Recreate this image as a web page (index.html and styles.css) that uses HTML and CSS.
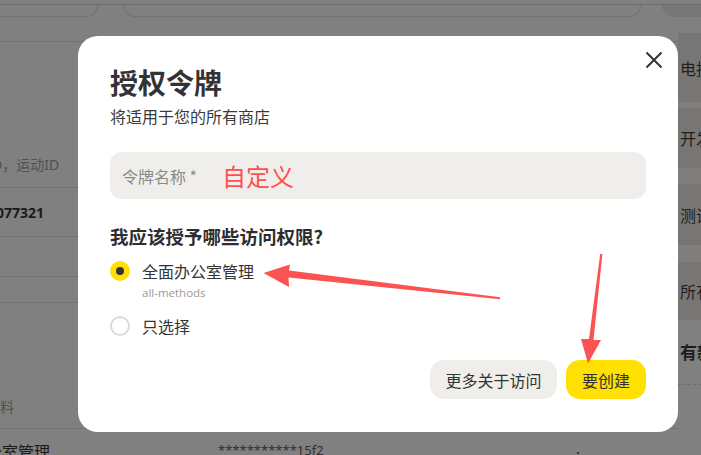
FILE: index.html
```html
<!DOCTYPE html>
<html lang="zh">
<head>
<meta charset="utf-8">
<title>授权令牌</title>
<link rel="stylesheet" href="styles.css">
</head>
<body>
<div class="page">
  <div class="topbar">
    <div class="tf tf1"></div>
    <div class="tf tf2"></div>
    <div class="tf tf3"></div>
  </div>
  <div class="main">
    <div class="left">
      <div class="row row-h"><span class="muted">D，运动ID</span></div>
      <div class="row row-a"><span class="strong">077321</span></div>
      <div class="row row-b"></div>
      <div class="row row-c"></div>
      <div class="row row-d"><span class="muted">料</span></div>
      <div class="row row-e"><span class="dark">公室管理</span><span class="mask">***********15f2</span><span class="dot">.</span></div>
    </div>
    <div class="right">
      <div class="band b1"><span>电拐</span></div>
      <div class="gap g1"></div>
      <div class="band b2"><span>开发</span></div>
      <div class="gap g2"></div>
      <div class="band b3"><span>测试</span></div>
      <div class="gap g3"></div>
      <div class="band b4"><span>所有</span></div>
      <div class="plain"><span class="bold">有新</span></div>
      <div class="dashed"></div>
    </div>
  </div>
</div>

<div class="modal">
  <button class="close" aria-label="关闭">
    <svg width="18" height="18" viewBox="0 0 18 18"><path d="M1.5 1.5 L16.5 16.5 M16.5 1.5 L1.5 16.5" stroke="#333" stroke-width="2" fill="none"/></svg>
  </button>
  <h1 class="title">授权令牌</h1>
  <p class="subtitle">将适用于您的所有商店</p>
  <div class="input">
    <span class="placeholder">令牌名称 *</span>
    <span class="annot">自定义</span>
  </div>
  <h2 class="question">我应该授予哪些访问权限?</h2>
  <div class="options">
    <div class="option">
      <div class="opt-row"><span class="radio checked"></span><span class="opt-label">全面办公室管理</span></div>
      <div class="opt-sub">all-methods</div>
    </div>
    <div class="option">
      <div class="opt-row"><span class="radio"></span><span class="opt-label">只选择</span></div>
    </div>
  </div>
  <div class="actions">
    <button class="btn btn-gray">更多关于访问</button>
    <button class="btn btn-yellow">要创建</button>
  </div>
</div>

<svg class="arrows" width="701" height="455" viewBox="0 0 701 455">
  <polygon fill="#fb5252" points="500,297.3 289,270.5 290,264.5 263.5,273 289,287 288.5,277.5 500,299.3"/>
  <polygon fill="#fb5252" points="600.2,254 589,339 581,339 588,363.5 601,340 593.5,340 602.4,254"/>
</svg>
</body>
</html>
```

FILE: styles.css
```css
* { box-sizing: border-box; }
html, body { margin: 0; padding: 0; }
body {
  width: 701px;
  height: 455px;
  overflow: hidden;
  position: relative;
  font-family: "Noto Sans", "Noto Sans CJK SC", sans-serif;
  background: #808080;
}

/* dimmed background page */
.page {
  width: 701px;
  height: 455px;
  display: flex;
  flex-direction: column;
  background: #808080;
  color: #1c1c1c;
}
.topbar {
  height: 38px;
  flex: none;
  border-top: 1px solid #6e6e6e;
  margin-top: 4px;
  border-bottom: 1px solid #737373;
  display: flex;
  align-items: flex-start;
}
.tf {
  height: 12px;
  border: 1px solid #727272;
  border-top: none;
  border-radius: 0 0 16px 16px;
  flex: none;
}
.tf1 { width: 123px; margin-left: -25px; }
.tf2 { width: 518px; margin-left: 25px; border-radius: 0 0 18px 18px; }
.tf3 { flex: 1; margin-left: 21px; margin-right: -20px; background: #787775; border-color: #787775; }

.main { flex: 1; display: flex; min-width: 0; }
.left { flex: 1; min-width: 0; display: flex; flex-direction: column; }
.row { border-bottom: 1px solid #737373; display: flex; align-items: flex-end; font-size: 14px; white-space: nowrap; }
.row > span { flex: none; }
.row-h { height: 146px; padding-bottom: 13px; margin-left: -8px; }
.row-a { height: 49px; align-items: center; }
.row-b { height: 40px; }
.row-c { height: 26px; }
.row-d { height: 126px; padding-bottom: 12px; }
.row-e { flex: 1; border-bottom: none; align-items: flex-start; padding-top: 10px; }
.muted { color: #505050; }
.strong { color: #1a1a1a; font-weight: 700; font-size: 14px; margin-left: -4px; }
.dark { color: #1a1a1a; margin-left: -14px; font-size: 16px; width: 64px; }
.mask { margin-left: 168px; color: #303030; font-size: 13px; margin-top: 2px; width: 95px; }
.dot { margin-left: 263px; color: #1a1a1a; }

.right { width: 23px; flex: none; display: flex; flex-direction: column; margin-top: -9px; }
.band { background: #787674; font-size: 16px; color: #1e1e1e; display: flex; align-items: center; white-space: nowrap; padding-left: 2px; overflow: hidden; }
.gap { background: #807f7e; }
.b1 { height: 69px; }
.g1 { height: 6px; }
.b2 { height: 60px; }
.g2 { height: 16px; }
.b3 { height: 61px; }
.g3 { height: 17px; }
.b4 { height: 58px; }
.plain { height: 64px; display: flex; align-items: center; overflow: hidden; white-space: nowrap; font-size: 17px; padding-bottom: 2px; padding-left: 2px; }
.bold { font-weight: 700; color: #1e1e1e; }
.dashed { border-top: 1px dashed #6e6e6e; margin-left: -20px; }

/* modal */
.modal {
  position: absolute;
  left: 78px;
  top: 36px;
  width: 600px;
  height: 396px;
  background: #fff;
  border-radius: 20px;
  padding: 28px 32px 33px;
  display: flex;
  flex-direction: column;
  color: #333;
  font-family: "Noto Sans CJK SC", "Noto Sans", sans-serif;
}
.close {
  position: absolute;
  top: 15px;
  right: 15px;
  width: 18px;
  height: 18px;
  padding: 0;
  border: none;
  background: none;
  display: flex;
}
.title {
  margin: 0;
  font-size: 28px;
  line-height: 36px;
  font-weight: 700;
  color: #333;
}
.subtitle {
  margin: 6px 0 0;
  font-size: 16px;
  line-height: 20px;
  color: #3a3a3a;
}
.input {
  margin-top: 26px;
  height: 47px;
  background: #efeeea;
  border-radius: 12px;
  display: flex;
  align-items: center;
  padding-left: 12px;
  gap: 25px;
}
.placeholder { font-size: 16px; color: #8a8a8a; }
.annot { font-size: 24px; color: #ff4f4f; line-height: 30px; }
.question {
  margin: 25px 0 0;
  font-size: 18.5px;
  line-height: 24px;
  font-weight: 700;
  color: #2e2e2e;
}
.options { margin-top: 13px; display: flex; flex-direction: column; gap: 16px; }
.opt-row { display: flex; align-items: center; gap: 12px; height: 20px; }
.radio {
  width: 20px;
  height: 20px;
  border-radius: 50%;
  border: 2px solid #dedbd7;
  background: #fff;
  display: flex;
  align-items: center;
  justify-content: center;
  flex: none;
}
.radio.checked { background: #ffe000; border-color: #ffe000; }
.radio.checked::after {
  content: "";
  width: 8px;
  height: 8px;
  border-radius: 50%;
  background: #333;
}
.opt-label { font-size: 16px; color: #333; }
.opt-sub {
  margin-top: 5px;
  margin-left: 32px;
  font-size: 11.5px;
  line-height: 14px;
  color: #9a9a9a;
  font-family: "Open Sans", "Noto Sans", sans-serif;
}
.actions {
  margin-top: auto;
  display: flex;
  justify-content: flex-end;
  gap: 9px;
}
.btn {
  height: 39px;
  border: none;
  border-radius: 14px;
  font-family: "Noto Sans CJK SC", "Noto Sans", sans-serif;
  font-size: 16px;
  color: #333;
  padding: 0;
}
.btn-gray { background: #efeeea; width: 127px; }
.btn-yellow { background: #ffe000; width: 80px; }

.arrows { position: absolute; left: 0; top: 0; pointer-events: none; }
```
